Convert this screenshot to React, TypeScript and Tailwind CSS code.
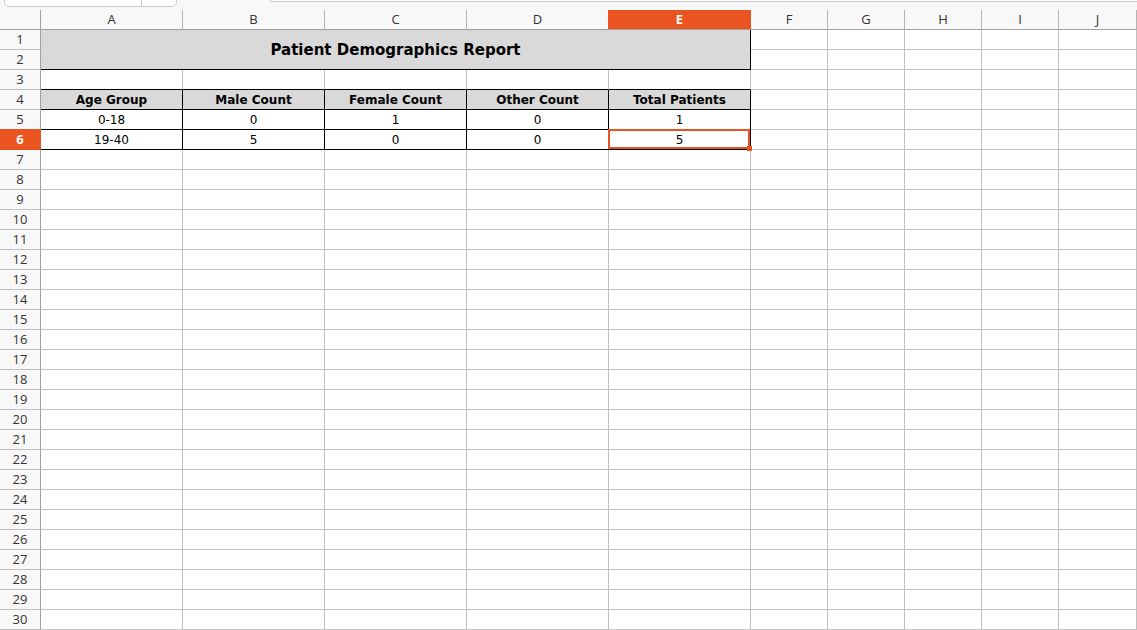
import React from "react";

const COLS = ["A", "B", "C", "D", "E", "F", "G", "H", "I", "J"];
const ROWS = Array.from({ length: 30 }, (_, i) => i + 1);

const HEAD = ["Age Group", "Male Count", "Female Count", "Other Count", "Total Patients"];
const DATA: Record<number, string[]> = {
  5: ["0-18", "0", "1", "0", "1"],
  6: ["19-40", "5", "0", "0", "5"],
};

const uiFont = "font-['Open_Sans',sans-serif]";
const cellFont = "font-['DejaVu_Sans',sans-serif]";

function RowHeader({ n }: { n: number }) {
  const active = n === 6;
  return (
    <div
      className={`flex items-center justify-center border-r border-b text-[13px] ${uiFont} ${
        active
          ? "bg-[#e95420] border-[#e95420] text-white font-bold"
          : n === 5
          ? "bg-[#f8f8f8] border-r-[#a0a0a0] border-b-[#e95420] text-[#333]"
          : "bg-[#f8f8f8] border-r-[#a0a0a0] border-b-[#c0c0c0] text-[#333]"
      }`}
    >
      {n}
    </div>
  );
}

function ColHeader({ c }: { c: string }) {
  const active = c === "E";
  return (
    <div
      className={`flex items-center justify-center border-r border-b text-[13px] ${uiFont} ${
        active
          ? "bg-[#e95420] border-r-[#e95420] border-b-[#a0a0a0] text-white font-bold"
          : c === "D"
          ? "bg-[#f8f8f8] border-r-[#e95420] border-b-[#a0a0a0] text-[#333]"
          : "bg-[#f8f8f8] border-r-[#b4b4b4] border-b-[#a0a0a0] text-[#333]"
      }`}
    >
      {c}
    </div>
  );
}

function Blank({ bottom = "border-b-[#c0c0c0]" }: { bottom?: string }) {
  return <div className={`bg-white border-r border-b border-r-[#c0c0c0] ${bottom}`} />;
}

function TableCell({
  text,
  head,
  selected,
}: {
  text: string;
  head?: boolean;
  selected?: boolean;
}) {
  return (
    <div
      className={`relative flex items-center justify-center border-r border-b border-black text-[12px] text-black ${cellFont} ${
        head ? "bg-[#d9d9d9] font-bold" : "bg-white"
      }`}
    >
      {text}
      {selected && (
        <div className="absolute -left-px -top-px right-0 bottom-0 z-10 border-2 border-[#e95420]">
          <div className="absolute -right-[4px] -bottom-[4px] h-[5px] w-[5px] bg-[#e95420]" />
        </div>
      )}
    </div>
  );
}

export default function App() {
  const cells: React.ReactNode[] = [];

  // corner + column letters
  cells.push(
    <div key="corner" className="border-r border-b border-r-[#a0a0a0] border-b-[#a0a0a0] bg-[#f8f8f8]" />
  );
  COLS.forEach((c) => cells.push(<ColHeader key={`h${c}`} c={c} />));

  ROWS.forEach((r) => {
    cells.push(<RowHeader key={`r${r}`} n={r} />);
    COLS.forEach((c, ci) => {
      const key = `${c}${r}`;
      if (ci < 5) {
        if (r === 1 && ci === 0) {
          cells.push(
            <div
              key={key}
              className={`col-span-5 row-span-2 flex items-center justify-center border-r border-b border-black bg-[#d9d9d9] pt-[2px] text-[15px] font-bold text-black ${cellFont}`}
            >
              Patient Demographics Report
            </div>
          );
          return;
        }
        if (r <= 2) return;
        if (r === 3) {
          cells.push(<Blank key={key} bottom="border-b-black" />);
          return;
        }
        if (r === 4) {
          cells.push(<TableCell key={key} text={HEAD[ci]} head />);
          return;
        }
        if (r === 5 || r === 6) {
          cells.push(<TableCell key={key} text={DATA[r][ci]} selected={r === 6 && ci === 4} />);
          return;
        }
      }
      cells.push(<Blank key={key} />);
    });
  });

  return (
    <div className="h-[630px] w-[1137px] overflow-hidden bg-white">
      {/* toolbar edge: name box and formula input */}
      <div className="relative h-[10px] bg-[#f8f8f8]">
        <div className="absolute left-[4px] top-[-20px] flex h-[27px] w-[173px] rounded-b-[5px] border border-[#c8c8c8] bg-white">
          <div className="h-full w-[137px] border-r border-[#c8c8c8]" />
        </div>
        <div className="absolute left-[270px] right-0 top-[-20px] h-[22px] border-l border-b border-[#c8c8c8] bg-white" />
      </div>
      <div className="grid grid-cols-[41px_142px_142px_142px_142px_142px_77px_77px_77px_77px_78px] auto-rows-[20px]">
        {cells}
      </div>
    </div>
  );
}
